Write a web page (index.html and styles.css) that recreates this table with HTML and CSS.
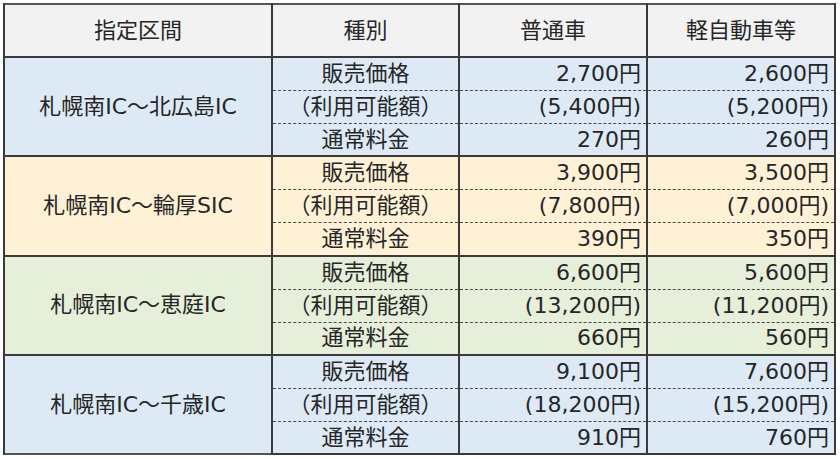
FILE: index.html
```html
<!DOCTYPE html>
<html lang="ja">
<head>
<meta charset="utf-8">
<link rel="stylesheet" href="styles.css">
</head>
<body>
<table class="fare">
  <colgroup>
    <col class="c-sec"><col class="c-kind"><col class="c-num"><col class="c-num">
  </colgroup>
  <thead>
    <tr><th>指定区間</th><th>種別</th><th>普通車</th><th>軽自動車等</th></tr>
  </thead>
  <tbody class="g-blue">
    <tr class="first"><td rowspan="3" class="sec">札幌南IC～北広島IC</td><td class="kind">販売価格</td><td class="num">2,700円</td><td class="num">2,600円</td></tr>
    <tr class="mid"><td class="kind">（利用可能額）</td><td class="num">(5,400円)</td><td class="num">(5,200円)</td></tr>
    <tr class="last"><td class="kind">通常料金</td><td class="num">270円</td><td class="num">260円</td></tr>
  </tbody>
  <tbody class="g-orange">
    <tr class="first"><td rowspan="3" class="sec">札幌南IC～輪厚SIC</td><td class="kind">販売価格</td><td class="num">3,900円</td><td class="num">3,500円</td></tr>
    <tr class="mid"><td class="kind">（利用可能額）</td><td class="num">(7,800円)</td><td class="num">(7,000円)</td></tr>
    <tr class="last"><td class="kind">通常料金</td><td class="num">390円</td><td class="num">350円</td></tr>
  </tbody>
  <tbody class="g-green">
    <tr class="first"><td rowspan="3" class="sec">札幌南IC～恵庭IC</td><td class="kind">販売価格</td><td class="num">6,600円</td><td class="num">5,600円</td></tr>
    <tr class="mid"><td class="kind">（利用可能額）</td><td class="num">(13,200円)</td><td class="num">(11,200円)</td></tr>
    <tr class="last"><td class="kind">通常料金</td><td class="num">660円</td><td class="num">560円</td></tr>
  </tbody>
  <tbody class="g-blue">
    <tr class="first"><td rowspan="3" class="sec">札幌南IC～千歳IC</td><td class="kind">販売価格</td><td class="num">9,100円</td><td class="num">7,600円</td></tr>
    <tr class="mid"><td class="kind">（利用可能額）</td><td class="num">(18,200円)</td><td class="num">(15,200円)</td></tr>
    <tr class="last"><td class="kind">通常料金</td><td class="num">910円</td><td class="num">760円</td></tr>
  </tbody>
</table>
</body>
</html>
```

FILE: styles.css
```css
html, body {
  margin: 0;
  padding: 0;
  background: #ffffff;
}
body {
  padding: 3px 0 0 3px;
  font-family: "DejaVu Sans", "Noto Sans CJK JP", sans-serif;
  color: #262626;
}
.fare {
  border-collapse: collapse;
  table-layout: fixed;
  width: 832px;
  border: 2px solid #555555;
  font-size: 22px;
  line-height: 1;
}
.c-sec { width: 268px; }
.c-kind { width: 187px; }
.c-num { width: 188px; }
.fare th {
  background: #f2f2f2;
  font-weight: normal;
  height: 51px;
  padding: 0;
  text-align: center;
  border: 2px solid #3a3a3a;
  border-top: none;
}
.fare td {
  padding: 0 5px;
  height: 32px;
  border-left: 2px solid #3a3a3a;
  border-right: 2px solid #3a3a3a;
}
.fare tr.last td {
  height: 31.3px;
}
.fare tbody {
  border-top: 2px solid #3a3a3a;
}
.fare tr.first td, .fare tr.mid td {
  border-bottom: 1px dashed #4a4a4a;
}
.fare td.sec {
  text-align: center;
  border-bottom: 2px solid #3a3a3a;
}
.fare tr.last td {
  border-bottom: 2px solid #3a3a3a;
}
.fare td.kind {
  text-align: center;
  padding: 0;
}
.fare td.num {
  text-align: right;
}
.g-blue td { background: #ddeaf6; }
.g-orange td { background: #fef1d6; }
.g-green td { background: #e5efd9; }
```
